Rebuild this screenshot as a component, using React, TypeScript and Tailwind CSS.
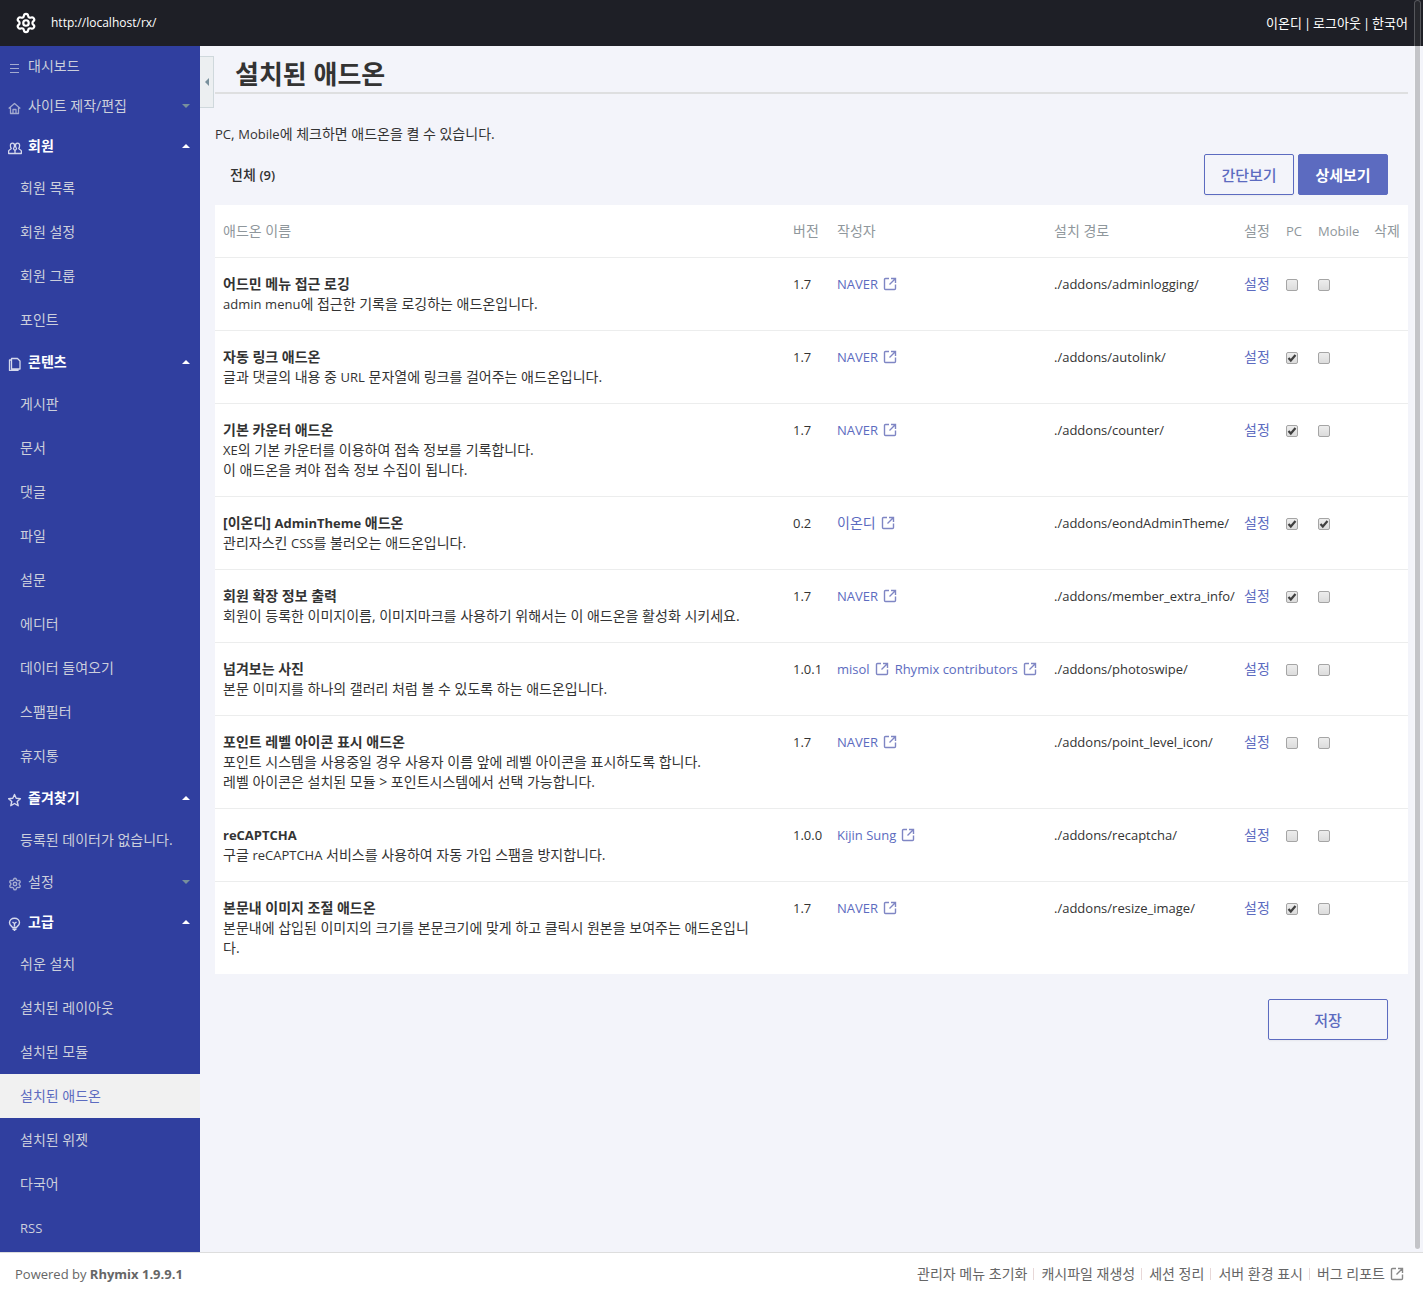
import { ReactNode } from "react";
import { Settings } from "lucide-react";

type IconProps = { className?: string };

function Glyph({ className, children }: { className?: string; children: ReactNode }) {
  return (
    <svg
      viewBox="0 0 14 14"
      fill="none"
      stroke="currentColor"
      strokeLinejoin="round"
      className={className}
      aria-hidden="true"
    >
      {children}
    </svg>
  );
}

const ListIcon = () => (
  <Glyph className="size-[14px] shrink-0">
    <path d="M2 3.5h9M2 7.5h9M2 11.5h9" />
  </Glyph>
);

const HomeIcon = () => (
  <Glyph className="size-[14px] shrink-0">
    <path d="M.7 7.5 6.5 2.5l5.800 5M2.500 6.500v6h8v-6M5 12.500V8.500h3v4" strokeWidth="1.3" />
  </Glyph>
);

const GroupIcon = () => (
  <Glyph className="size-[14px] shrink-0">
    <path
      d="M4.5 2.2c1.4 0 2 .9 2 2.2S5.9 6.9 5.5 7.4c0 1.3 1.2 1.5 1.5 2.1v3H.6V10c.2-1.2 2.2-1.2 2.7-2.6C2.7 6.8 2.4 5.7 2.4 4.400c0-1.300.8-2.200 2.100-2.200ZM9.500 2.200c-1.400 0-2 .9-2 2.200s.6 2.500 1 3c0 1.300-1.200 1.500-1.500 2.100v3h6.400V10c-.2-1.200-2.200-1.200-2.700-2.600.6-.6.900-1.700.900-3 0-1.300-.8-2.200-2.100-2.200Z"
      strokeWidth="1.3"
    />
  </Glyph>
);

const DocsIcon = () => (
  <Glyph className="size-[14px] shrink-0">
    <path d="M3.500 1.500h6l2.500 2.500v8h-8.500zM3.500 3H1.500v10.500h8.500V12" strokeWidth="1.3" />
  </Glyph>
);

const StarIcon = () => (
  <Glyph className="size-[14px] shrink-0">
    <path
      d="m6.500 1.500 1.700 3.800 4.200.4-3.200 2.800 1 4.200-3.700-2.200-3.700 2.200 1-4.200L.6 5.700l4.200-.4z"
      strokeWidth="1.4"
    />
  </Glyph>
);

const BulbIcon = () => (
  <Glyph className="size-[14px] shrink-0">
    <path
      d="M4.500 10.500C4.500 9.500 1.500 8.800 1.500 5.700c0-2.700 2.200-4.500 5-4.500s5 1.800 5 4.500c0 3.100-3 3.800-3 4.800zM4.500 12.200h4M5.700 13.500h1.600M6.500 9.500v-3M4.500 5l2 1.500 2-1.500"
      strokeWidth="1.4"
    />
  </Glyph>
);

const GearIcon = () => <Settings className="size-[14px] shrink-0" strokeWidth={2.4} />;

function ExternalIcon({ className }: IconProps) {
  return (
    <Glyph className={className}>
      <path d="M6 1.500H2.500a1 1 0 0 0-1 1v9a1 1 0 0 0 1 1h9a1 1 0 0 0 1-1V7.500" strokeWidth="1.400" />
      <path d="M8 1.500h4.500V6M12.500 1.500 6.500 7.500" strokeWidth="1.400" strokeLinejoin="miter" />
    </Glyph>
  );
}

const menus = [
  { title: "대시보드", icon: ListIcon },
  { title: "사이트 제작/편집", icon: HomeIcon, closed: true },
  { title: "회원", icon: GroupIcon, items: ["회원 목록", "회원 설정", "회원 그룹", "포인트"] },
  {
    title: "콘텐츠",
    icon: DocsIcon,
    items: ["게시판", "문서", "댓글", "파일", "설문", "에디터", "데이터 들여오기", "스팸필터", "휴지통"],
  },
  { title: "즐겨찾기", icon: StarIcon, items: ["등록된 데이터가 없습니다."] },
  { title: "설정", icon: GearIcon, closed: true },
  {
    title: "고급",
    icon: BulbIcon,
    items: ["쉬운 설치", "설치된 레이아웃", "설치된 모듈", "설치된 애드온", "설치된 위젯", "다국어", "RSS"],
  },
];

const addons = [
  {
    name: "어드민 메뉴 접근 로깅",
    desc: ["admin menu에 접근한 기록을 로깅하는 애드온입니다."],
    version: "1.7",
    authors: ["NAVER"],
    path: "./addons/adminlogging/",
    pc: false,
    mobile: false,
  },
  {
    name: "자동 링크 애드온",
    desc: ["글과 댓글의 내용 중 URL 문자열에 링크를 걸어주는 애드온입니다."],
    version: "1.7",
    authors: ["NAVER"],
    path: "./addons/autolink/",
    pc: true,
    mobile: false,
  },
  {
    name: "기본 카운터 애드온",
    desc: ["XE의 기본 카운터를 이용하여 접속 정보를 기록합니다.", "이 애드온을 켜야 접속 정보 수집이 됩니다."],
    version: "1.7",
    authors: ["NAVER"],
    path: "./addons/counter/",
    pc: true,
    mobile: false,
  },
  {
    name: "[이온디] AdminTheme 애드온",
    desc: ["관리자스킨 CSS를 불러오는 애드온입니다."],
    version: "0.2",
    authors: ["이온디"],
    path: "./addons/eondAdminTheme/",
    pc: true,
    mobile: true,
  },
  {
    name: "회원 확장 정보 출력",
    desc: ["회원이 등록한 이미지이름, 이미지마크를 사용하기 위해서는 이 애드온을 활성화 시키세요."],
    version: "1.7",
    authors: ["NAVER"],
    path: "./addons/member_extra_info/",
    pc: true,
    mobile: false,
  },
  {
    name: "넘겨보는 사진",
    desc: ["본문 이미지를 하나의 갤러리 처럼 볼 수 있도록 하는 애드온입니다."],
    version: "1.0.1",
    authors: ["misol", "Rhymix contributors"],
    path: "./addons/photoswipe/",
    pc: false,
    mobile: false,
  },
  {
    name: "포인트 레벨 아이콘 표시 애드온",
    desc: [
      "포인트 시스템을 사용중일 경우 사용자 이름 앞에 레벨 아이콘을 표시하도록 합니다.",
      "레벨 아이콘은 설치된 모듈 > 포인트시스템에서 선택 가능합니다.",
    ],
    version: "1.7",
    authors: ["NAVER"],
    path: "./addons/point_level_icon/",
    pc: false,
    mobile: false,
  },
  {
    name: "reCAPTCHA",
    desc: ["구글 reCAPTCHA 서비스를 사용하여 자동 가입 스팸을 방지합니다."],
    version: "1.0.0",
    authors: ["Kijin Sung"],
    path: "./addons/recaptcha/",
    pc: false,
    mobile: false,
  },
  {
    name: "본문내 이미지 조절 애드온",
    desc: ["본문내에 삽입된 이미지의 크기를 본문크기에 맞게 하고 클릭시 원본을 보여주는 애드온입니다."],
    version: "1.7",
    authors: ["NAVER"],
    path: "./addons/resize_image/",
    pc: true,
    mobile: false,
  },
];

const footerLinks = ["관리자 메뉴 초기화", "캐시파일 재생성", "세션 정리", "서버 환경 표시"];

// Latin words run one size smaller than the Hangul around them
function Mixed({ text }: { text: string }) {
  return text.split(/([A-Za-z]+)/).map((part, i) =>
    i % 2 ? (
      <span key={i} className="text-[13px]">
        {part}
      </span>
    ) : (
      part
    )
  );
}

function Caret({ up }: { up?: boolean }) {
  return (
    <svg viewBox="0 0 8 4" className={up ? "h-1 w-2 fill-white" : "h-1 w-2 fill-[#78909c]"} aria-hidden="true">
      <path d={up ? "M4 0 8 4H0z" : "M0 0h8L4 4z"} />
    </svg>
  );
}

function Check({ label, checked }: { label: string; checked: boolean }) {
  return (
    <div className="relative mt-[5px] size-3">
      <input
        type="checkbox"
        aria-label={label}
        defaultChecked={checked}
        className="peer block size-3 appearance-none rounded-[2px] border border-[#a5a5a5] bg-linear-to-b from-[#ededed] to-[#dcdcdc]"
      />
      <svg
        viewBox="0 0 12 12"
        className="pointer-events-none absolute inset-0 hidden size-3 fill-none stroke-[#404040] peer-checked:block"
        strokeWidth="2.2"
        aria-hidden="true"
      >
        <path d="m2.500 6 2.300 2.500L9.500 3" />
      </svg>
    </div>
  );
}

function Sidebar() {
  return (
    <nav className="w-[200px] shrink-0 bg-[#303f9f] text-[#cccfdc]">
      {menus.map(({ title, icon: Icon, items, closed }) => (
        <div key={title}>
          <a href="#" className={`flex h-10 items-center gap-[6px] pr-[10px] pl-2 ${items ? "text-white" : ""}`}>
            <span className={items ? "mt-1 text-[#d5d9ec]" : "mt-1 text-[#a3aacf]"}>
              <Icon />
            </span>
            <span className={items ? "flex-1 font-bold" : "flex-1"}>{title}</span>
            {(items || closed) && <Caret up={!!items} />}
          </a>
          {items && (
            <ul>
              {items.map((item) => (
                <li key={item}>
                  <a
                    href="#"
                    className={`flex h-11 items-center px-5 ${
                      item === "설치된 애드온" ? "bg-[#f1f1f1] text-[#5c6bc0]" : ""
                    }`}
                  >
                    <Mixed text={item} />
                  </a>
                </li>
              ))}
            </ul>
          )}
        </div>
      ))}
    </nav>
  );
}

function AddonTable() {
  return (
    <table className="w-full table-fixed bg-white text-left">
      <colgroup>
        <col />
        <col className="w-11" />
        <col className="w-[217px]" />
        <col className="w-[190px]" />
        <col className="w-[42px]" />
        <col className="w-8" />
        <col className="w-14" />
        <col className="w-[42px]" />
      </colgroup>
      <thead className="text-[#8f979c]">
        <tr>
          {["애드온 이름", "버전", "작성자", "설치 경로", "설정", "PC", "Mobile", "삭제"].map((head) => (
            <th key={head} scope="col" className="px-2 py-4 font-normal whitespace-nowrap">
              <Mixed text={head} />
            </th>
          ))}
        </tr>
      </thead>
      <tbody>
        {addons.map((addon) => (
          <tr key={addon.name} className="border-t border-[#eceded] align-top">
            <td className="py-4 pr-6 pl-2">
              <p className="font-bold">
                <Mixed text={addon.name} />
              </p>
              {addon.desc.map((line) => (
                <p key={line}>
                  <Mixed text={line} />
                </p>
              ))}
            </td>
            <td className="px-2 py-4 text-[13px] whitespace-nowrap">{addon.version}</td>
            <td className="px-2 py-4">
              <div className="flex gap-[6px] whitespace-nowrap text-[#5c6bc0]">
                {addon.authors.map((author) => (
                  <a key={author} href="#" className="flex items-center gap-[5px]">
                    <span className={/[A-Z]/i.test(author) ? "text-[13px]" : ""}>{author}</span>
                    <ExternalIcon className="size-[14px] text-[#7f86c4]" />
                  </a>
                ))}
              </div>
            </td>
            <td className="px-2 py-4 text-[13px] whitespace-nowrap">{addon.path}</td>
            <td className="px-2 py-4 whitespace-nowrap">
              <a href="#" className="text-[#5c6bc0]">
                설정
              </a>
            </td>
            <td className="px-2 py-4">
              <Check label={`${addon.name} PC`} checked={addon.pc} />
            </td>
            <td className="px-2 py-4">
              <Check label={`${addon.name} Mobile`} checked={addon.mobile} />
            </td>
            <td></td>
          </tr>
        ))}
      </tbody>
    </table>
  );
}

export default function App() {
  return (
    <div className="relative flex min-h-screen flex-col bg-[#f3f4fa] font-['Open_Sans','Noto_Sans_CJK_KR',sans-serif] text-sm leading-5 text-[#333]">
      {/* Top bar */}
      <header className="flex h-[46px] items-center bg-[#1e1f26] px-[15px] text-[13px] text-white">
        <Settings className="size-[22px]" strokeWidth={2.4} />
        <a href="#" className="ml-[14px] flex-1 text-xs">
          http://localhost/rx/
        </a>
        <div className="flex gap-[2px]">
          <a href="#">이온디</a>
          <span>|</span>
          <a href="#">로그아웃</a>
          <span>|</span>
          <a href="#">한국어</a>
        </div>
      </header>

      <div className="flex flex-1">
        <Sidebar />

        {/* Sidebar toggle */}
        <button
          type="button"
          aria-label="메뉴 접기"
          className="mt-[10px] flex h-[52px] w-[14px] shrink-0 items-center justify-center border border-l-0 border-[#cfd8dc] bg-[#eceff1]"
        >
          <svg viewBox="0 0 4 8" className="h-2 w-1 fill-[#78909c]" aria-hidden="true">
            <path d="M4 0v8L0 4z" />
          </svg>
        </button>

        <main className="min-w-0 flex-1 pr-[15px] pl-px">
          <h1 className="border-b-2 border-[#dedfe0] pt-3 pb-[2px] pl-5 text-[26px] leading-8 font-bold">
            설치된 애드온
          </h1>
          <p className="mt-[30px]">
            <Mixed text="PC, Mobile에 체크하면 애드온을 켤 수 있습니다." />
          </p>

          <div className="my-[10px] flex items-center justify-between pr-5 pl-[15px]">
            <strong className="font-medium">
              전체 <span className="text-[13px] font-semibold">(9)</span>
            </strong>
            <div className="flex gap-1 text-[15px] font-medium">
              <button
                type="button"
                className="h-[41px] w-[90px] rounded-[2px] border border-[#5c6bc0] text-[#5c6bc0] shadow-xs"
              >
                간단보기
              </button>
              <button
                type="button"
                className="h-[41px] w-[90px] rounded-[2px] border border-[#5c6bc0] bg-[#5c6bc0] font-bold text-white"
              >
                상세보기
              </button>
            </div>
          </div>

          <AddonTable />

          <div className="mt-[25px] flex justify-end pr-5">
            <button
              type="submit"
              className="h-[41px] w-[120px] rounded-[2px] border border-[#5c6bc0] text-[15px] font-medium text-[#5c6bc0] shadow-xs"
            >
              저장
            </button>
          </div>
        </main>
      </div>

      <footer className="flex h-[42px] items-center justify-between border-t border-[#ddd] bg-white pr-[19px] pl-[15px] text-[#666]">
        <p className="text-[13px]">
          Powered by <strong className="font-bold">Rhymix 1.9.9.1</strong>
        </p>
        <ul className="flex items-center">
          {footerLinks.map((link) => (
            <li key={link} className="mr-[7px] flex items-center gap-[6px]">
              <a href="#">{link}</a>
              <span className="h-3 w-px bg-[#e8d8d8]" />
            </li>
          ))}
          <li>
            <a href="#" className="flex items-center gap-[5px]">
              버그 리포트 <ExternalIcon className="size-[14px] text-[#888]" />
            </a>
          </li>
        </ul>
      </footer>

      {/* Floating scroll thumb */}
      <div className="absolute top-0 right-[2px] bottom-11 w-[7px] rounded-full border border-white/25 bg-[#424242]/27 bg-clip-padding" />
    </div>
  );
}
